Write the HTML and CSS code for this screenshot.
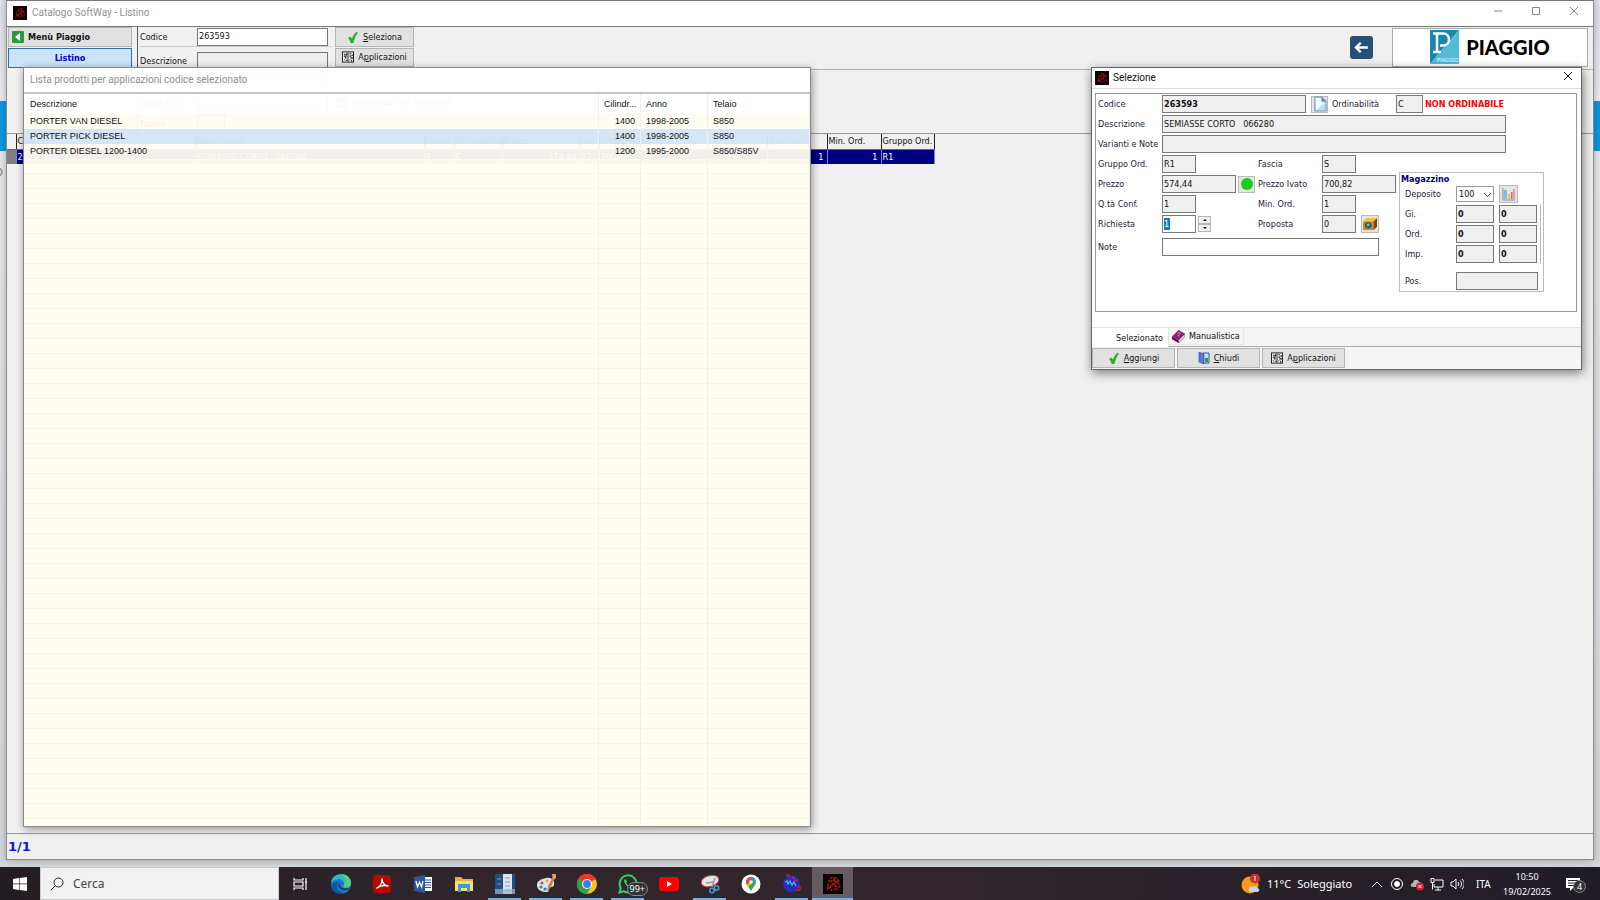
FILE: index.html
```html
<!DOCTYPE html>
<html lang="it">
<head>
  <meta charset="UTF-8">
  <title>Catalogo SoftWay - Listino</title>
  <meta name="viewport" content="width=device-width, initial-scale=1.0">
  <link rel="stylesheet" href="styles.css">
</head>
<body>

  <!-- shared icons -->
  <svg class="defs" width="0" height="0">
    <symbol id="i-app" viewBox="0 0 20 20">
      <rect width="20" height="20" fill="#080304"/>
      <path d="M4 16l1-4 1-5 3-4 4 1 3 3-1 2 2 3-3 4M7 8l3-2 3 3-4 2-3 4M11 4l2 4 3-1M5 13l3 1 1 3M12 11l2 2-3 4M9 9l4 4M7 12l4-1" fill="none" stroke="#b8141a" stroke-width="1.300" stroke-dasharray="3 1"/>
    </symbol>
    <symbol id="i-check" viewBox="0 0 12 12">
      <path d="M1.500 7l2-1 1.500 2.500c1-3 2.500-6 4.500-7.500l1 1C8.500 4 7 8 6 12H4C3.500 10 2.500 8 1.500 7z" fill="#22b81c" stroke="#128a10" stroke-width=".5"/>
    </symbol>
    <symbol id="i-grid" viewBox="0 0 13 12">
      <rect x=".5" y=".5" width="12" height="11" fill="#fff" stroke="#111"/>
      <path d="M6.500 1v10" stroke="#111"/>
      <path d="M2 3h2M5 2v2M2 5h3M3 7h2M2 9h1M4 9.500h2M8 2.500h2M11 3v2M8 5h2M9 7h3M8 9h1M10.500 9v2" stroke="#111" stroke-width="1.200"/>
    </symbol>
  </svg>

  <div class="desktop">
    <span class="desk-letter">O</span>

    <main class="window">
      <header class="titlebar">
        <svg class="app-icon"><use href="#i-app"/></svg>
        <h1>Catalogo SoftWay - Listino</h1>
        <div class="win-buttons">
          <button aria-label="Riduci"><svg viewBox="0 0 10 10"><path d="M1 5h8"/></svg></button>
          <button aria-label="Ingrandisci"><svg viewBox="0 0 10 10"><path d="M1.500 1.500h7v7h-7z"/></svg></button>
          <button aria-label="Chiudi"><svg viewBox="0 0 10 10"><path d="M1 1l8 8M9 1L1 9"/></svg></button>
        </div>
      </header>

      <section class="toolbar">
        <nav class="side">
          <button class="btn side-btn menu">
            <svg viewBox="0 0 12 12"><rect width="12" height="12" rx="1" fill="#2a9a3c"/><path d="M8 2v8L3 6z" fill="#fff"/></svg>
            Menù Piaggio
          </button>
          <button class="btn side-btn active">Listino</button>
        </nav>
        <form class="search">
          <div class="search-row first"><label for="codice">Codice</label><input id="codice" class="field" value="263593"></div>
          <div class="search-row"><label for="descr">Descrizione</label><input id="descr" class="field grey"></div>
          <div class="search-row"><label for="cerca1">Cerca in</label><input id="cerca1" class="field"></div>
          <div class="search-row"><label for="cerca2">Cerca in 2</label><input id="cerca2" class="field"></div>
          <div class="search-row"><label for="fascia">Fascia</label><input id="fascia" class="field short"></div>
        </form>
        <div class="tools">
          <div class="tools-top">
            <div class="tool-buttons">
              <button class="btn"><svg class="ic"><use href="#i-check"/></svg><span><u>S</u>eleziona</span></button>
              <button class="btn"><svg class="ic"><use href="#i-grid"/></svg><span>A<u>p</u>plicazioni</span></button>
            </div>
            <div class="brand">
              <button class="back" aria-label="Indietro"><svg viewBox="0 0 24 24"><path d="M20 12H6M11 6l-6 6 6 6"/></svg></button>
              <div class="logo">
                <svg class="logo-mark" viewBox="0 0 29 34">
                  <path d="M0 0h29L0 34z" fill="#1787b0"/>
                  <path d="M29 0v34H0z" fill="#55b9dc"/>
                  <path d="M3 3.500h10c8 0 8 12 0 12h-3M7 4v18M3 22h8" fill="none" stroke="#fff" stroke-width="2.500"/>
                  <text x="7" y="32">PIAGGIO</text>
                </svg>
                <span class="logo-text">PIAGGIO</span>
              </div>
            </div>
          </div>
          <label class="only"><input type="checkbox" checked> Visualizza non Ordinabili</label>
        </div>
      </section>

      <section class="results">
        <table class="price-list">
          <thead>
            <tr>
              <th class="c-mark"></th><th class="c-code">Codice</th><th class="c-desc">Descrizione</th><th class="c-fascia">Fascia</th><th class="c-ord">Ordinabilità</th><th class="c-price">Prezzo</th><th class="c-iva">Iva</th><th class="c-gross">Prezzo Ivato</th><th class="c-qty">Q.tà Conf.</th><th class="c-min">Min. Ord.</th><th class="c-group">Gruppo Ord.</th>
            </tr>
          </thead>
          <tbody>
            <tr>
              <td class="mark"></td><td>263593</td><td>SEMIASSE CORTO &nbsp; 066280</td><td>S</td><td>C</td><td class="num">574,44</td><td>22</td><td>700,82</td><td class="num">1</td><td class="num">1</td><td>R1</td>
            </tr>
          </tbody>
        </table>
      </section>

      <footer class="status">1/1</footer>
    </main>

    <!-- applications list -->
    <section class="popup">
      <h2>Lista prodotti per applicazioni codice selezionato</h2>
      <table class="apps">
        <thead>
          <tr><th>Descrizione</th><th class="a-cc">Cilindr...</th><th class="a-year">Anno</th><th class="a-frame">Telaio</th></tr>
        </thead>
        <tbody>
          <tr><td>PORTER VAN DIESEL</td><td class="num">1400</td><td>1998-2005</td><td>S850</td></tr>
          <tr class="selected"><td>PORTER PICK DIESEL</td><td class="num">1400</td><td>1998-2005</td><td>S850</td></tr>
          <tr><td>PORTER DIESEL 1200-1400</td><td class="num">1200</td><td>1995-2000</td><td>S850/S85V</td></tr>
          <tr class="filler"><td></td><td></td><td></td><td></td></tr>
        </tbody>
      </table>
    </section>

    <!-- selected item -->
    <section class="dialog">
      <header class="dialog-title">
        <svg class="app-icon"><use href="#i-app"/></svg>
        <h2>Selezione</h2>
        <button aria-label="Chiudi"><svg viewBox="0 0 10 10"><path d="M1 1l8 8M9 1L1 9"/></svg></button>
      </header>

      <form class="panel">
        <div class="wide">
          <div class="row">
            <label for="s-codice">Codice</label>
            <input id="s-codice" class="field grey bold w-code" value="263593" readonly>
            <button type="button" class="icon-btn flat" aria-label="Documento">
              <svg viewBox="0 0 16 18"><path d="M2 1h8l5 5v11H2z" fill="#b9dcf5" stroke="#6c8fb5"/><path d="M3 2h6v4l4 2-9 8z" fill="#f2f9fe"/><path d="M10 1v5h5z" fill="#4f86c0"/></svg>
            </button>
            <label for="s-ord" class="l-ord">Ordinabilità</label>
            <input id="s-ord" class="field grey w-ord" value="C" readonly>
            <strong class="warn">NON ORDINABILE</strong>
          </div>
          <div class="row"><label for="s-descr">Descrizione</label><input id="s-descr" class="field grey w-long" value="SEMIASSE CORTO   066280" readonly></div>
          <div class="row"><label for="s-var">Varianti e Note</label><input id="s-var" class="field grey w-long" readonly></div>
        </div>
        <div class="columns">
          <div class="left">
            <div class="row">
              <label for="s-gruppo">Gruppo Ord.</label><span class="cell"><input id="s-gruppo" class="field grey w-s" value="R1" readonly></span>
              <label for="s-fascia" class="l-mid">Fascia</label><input id="s-fascia" class="field grey w-s" value="S" readonly>
            </div>
            <div class="row">
              <label for="s-prezzo">Prezzo</label><span class="cell"><input id="s-prezzo" class="field grey w-m" value="574,44" readonly><button type="button" class="icon-btn" aria-label="Disponibile"><i class="dot"></i></button></span>
              <label for="s-ivato" class="l-mid">Prezzo Ivato</label><input id="s-ivato" class="field grey w-m" value="700,82" readonly>
            </div>
            <div class="row">
              <label for="s-qta">Q.tà Conf.</label><span class="cell"><input id="s-qta" class="field grey w-s" value="1" readonly></span>
              <label for="s-min" class="l-mid">Min. Ord.</label><input id="s-min" class="field grey w-s" value="1" readonly>
            </div>
            <div class="row">
              <label for="s-rich">Richiesta</label>
              <span class="cell">
                <input id="s-rich" class="field request w-s" value="1">
                <span class="spinner"><button type="button" aria-label="Aumenta"><i class="up"></i></button><button type="button" aria-label="Diminuisci"><i class="down"></i></button></span>
              </span>
              <label for="s-prop" class="l-mid">Proposta</label><input id="s-prop" class="field grey w-s" value="0" readonly>
              <button type="button" class="icon-btn box" aria-label="Imballo">
                <svg viewBox="0 0 16 16"><path d="M0 5l4-4h12l-4 4z" fill="#f4c04a"/><path d="M0 5h12v10H0z" fill="#d58b1c"/><path d="M12 5l4-4v10l-4 4z" fill="#7b4a10"/><circle cx="6" cy="9.500" r="3.800" fill="#18606c"/><path d="M4 8l3-1 1 2-3 2z" fill="#58c7b8"/></svg>
              </button>
            </div>
            <div class="row note"><label for="s-note">Note</label><input id="s-note" class="field w-note"></div>
          </div>

          <fieldset class="stock">
            <legend>Magazzino</legend>
            <div class="row">
              <label for="m-dep">Deposito</label>
              <select id="m-dep" class="field"><option>100</option></select>
              <button type="button" class="icon-btn chart" aria-label="Statistiche">
                <svg viewBox="0 0 14 14"><path d="M1 1v12h12" fill="none" stroke="#7b93a8"/><path d="M2 3h3v9H2z" fill="#7cbce6"/><path d="M6 7h2v5H6z" fill="#f2c33a"/><path d="M9 5h1.500v7H9z" fill="#e0605a"/><path d="M11 2h2v10h-2z" fill="#d9a0b0"/></svg>
              </button>
            </div>
            <div class="amounts">
              <div class="row"><label for="m-gi">Gi.</label><input id="m-gi" class="field grey bold" value="0" readonly><input aria-label="Gi. 2" class="field grey bold" value="0" readonly></div>
              <div class="row"><label for="m-ord">Ord.</label><input id="m-ord" class="field grey bold" value="0" readonly><input aria-label="Ord. 2" class="field grey bold" value="0" readonly></div>
              <div class="row"><label for="m-imp">Imp.</label><input id="m-imp" class="field grey bold" value="0" readonly><input aria-label="Imp. 2" class="field grey bold" value="0" readonly></div>
            </div>
            <div class="row pos"><label for="m-pos">Pos.</label><input id="m-pos" class="field grey w-pos" readonly></div>
          </fieldset>
        </div>
      </form>

      <div class="tabs">
        <button class="tab current">Selezionato</button>
        <button class="tab">
          <svg viewBox="0 0 14 14"><path d="M0 7l7-7 7 4-7 7z" fill="#8a1f7c"/><path d="M0 7v3l7 4v-3z" fill="#5b0f52"/><path d="M7 11l7-7v3l-7 7z" fill="#e8dfe8" stroke="#5b0f52" stroke-width=".6"/><path d="M6 4c1-2 4-1 2 1L7 6v1" fill="none" stroke="#ffd23a"/></svg>
          Manualistica
        </button>
      </div>
      <footer class="actions">
        <button class="btn"><svg class="ic"><use href="#i-check"/></svg><span><u>A</u>ggiungi</span></button>
        <button class="btn"><svg class="ic" viewBox="0 0 12 12"><path d="M5 1h6v10H5z" fill="#bfe3f5" stroke="#33549c"/><path d="M1 0l5 2v10l-5-2z" fill="#5b78d8" stroke="#2c3f94" stroke-width=".6"/><path d="M7 6h3v4H7z" fill="#2c9a48"/></svg><span><u>C</u>hiudi</span></button>
        <button class="btn"><svg class="ic"><use href="#i-grid"/></svg><span>A<u>p</u>plicazioni</span></button>
      </footer>
    </section>
  </div>

  <footer class="taskbar">
    <button class="start" aria-label="Start"><svg viewBox="0 0 14 14"><path d="M0 2l6-1v5.600H0zM6.600 .9L14 0v6.600H6.600zM0 7.300h6v5.600l-6-1zM6.600 7.300H14V14l-7.400-1z" fill="#fff"/></svg></button>
    <label class="find">
      <svg viewBox="0 0 14 14"><circle cx="8.500" cy="5.500" r="4.500"/><path d="M5.200 8.800L.8 13.200"/></svg>
      <input type="text" placeholder="Cerca" aria-label="Cerca">
    </label>
    <nav class="apps-bar">
      <button aria-label="Visualizzazione attività"><svg viewBox="0 0 20 20"><path d="M4 4v2h9V4M4 16v-2h9v2M4 8h9v4H4zM16 4v12M15 8h2" fill="none" stroke="#fff" stroke-width="1.200"/></svg></button>
      <button aria-label="Edge"><svg viewBox="0 0 20 20"><circle cx="10" cy="10" r="10" fill="#1278c8"/><path d="M0 9C1-3 20-2 20 9c0 5-5 6-8 4 3-5-1-8-5-8-4 1-6 2-7 4z" fill="#2fb9c0"/><path d="M10 0c7 0 10 5 10 9 0 4-5 5-8 4 5-5 2-10-2-13z" fill="#66d267" opacity=".8"/><path d="M7 9c-3 4 0 10 7 10-4 2-11 1-13-4-1-5 3-8 7-7z" fill="#0c57a5"/><path d="M9 9c-2 4 3 7 9 5 0 1-3 2-5 2-5-1-7-5-4-7z" fill="#262026"/></svg></button>
      <button aria-label="Acrobat"><svg viewBox="0 0 20 20"><rect x="1" y="1" width="18" height="18" rx="3" fill="#b30b00"/><path d="M5 14c3-1 5-5 5-9 0 4 3 7 6 7-4-1-8 0-11 2z" fill="none" stroke="#fff" stroke-width="1.400" stroke-linejoin="round"/></svg></button>
      <button aria-label="Word"><svg viewBox="0 0 20 20"><path d="M10 3h9v14h-9z" fill="#fff"/><path d="M12 6h6M12 8.500h6M12 11h6M12 13.500h6" stroke="#2b579a"/><path d="M1 3l11-2v18L1 17z" fill="#2b579a"/><path d="M3 7l1.500 6L6.500 8l2 5L10 7" fill="none" stroke="#fff" stroke-width="1.300"/></svg></button>
      <button aria-label="Esplora file"><svg viewBox="0 0 20 20"><path d="M1 3h6l2 2h10v12H1z" fill="#e9b13a"/><path d="M1 7h18v10H1z" fill="#ffdc78"/><path d="M4 10h12v8h-3v-4H7v4H4z" fill="#3f9bd8"/></svg></button>
      <button class="running" aria-label="Gestionale"><svg viewBox="0 0 20 20"><path d="M0 0h20v20H0z" fill="#1d4f80"/><path d="M8 0h9v20H8z" fill="#dce6ee"/><path d="M10 4h5M10 8h5M10 12h5M10 16h5M2 5h4M2 10h4" stroke="#7d98b0"/><path d="M0 15h20v5H0z" fill="#9bb5ca" opacity=".7"/></svg></button>
      <button class="running" aria-label="Paint"><svg viewBox="0 0 20 20"><path d="M10 4c6-1 9 3 8 7-1 3-4 1-5 3s1 4-3 4C4 18 1 15 1 11s4-6 9-7z" fill="#d7e6ee"/><circle cx="6" cy="9" r="1.600" fill="#e3473c"/><circle cx="5" cy="13" r="1.600" fill="#2f9e4c"/><circle cx="9" cy="15" r="1.500" fill="#2f6fd0"/><circle cx="11" cy="7" r="1.500" fill="#f0b020"/><path d="M18 1l-6 11-1 6 4-5 4-10z" fill="#c98442"/><path d="M16 0h4v4l-3 2z" fill="#e8a25c"/></svg></button>
      <button class="running" aria-label="Chrome"><svg viewBox="0 0 20 20"><circle cx="10" cy="10" r="10" fill="#fbc116"/><path d="M10 10L1.300 5A10 10 0 0 1 18.700 5z" fill="#e33b2e"/><path d="M10 10L1.300 5A10 10 0 0 0 10 20l4-7z" fill="#2fa24c"/><path d="M10 5h8.700" stroke="#e33b2e"/><circle cx="10" cy="10" r="5" fill="#fff"/><circle cx="10" cy="10" r="3.900" fill="#3b7ded"/></svg></button>
      <button class="running" aria-label="WhatsApp"><svg viewBox="0 0 20 20"><path d="M1.500 18.500l1.200-4.500a8.500 8.500 0 1 1 3.300 3.300z" fill="none" stroke="#2fd366" stroke-width="2"/><path d="M6 6c0 4 4 8 8 8l1-2-3-1-1 1-3-3 1-1-1-3z" fill="#2fd366"/></svg><span class="badge">99+</span></button>
      <button aria-label="YouTube"><svg viewBox="0 0 20 20"><rect y="3" width="20" height="14" rx="3" fill="#f00"/><path d="M8 7l5 3-5 3z" fill="#fff"/></svg></button>
      <button class="running" aria-label="Strumento di cattura"><svg viewBox="0 0 20 20"><ellipse cx="10" cy="7" rx="9" ry="5.500" transform="rotate(-15 10 7)" fill="#e9e4e4" stroke="#c0443c"/><path d="M6 9l8-1M15 4l-3 9" stroke="#8c98a4" stroke-width="1.500"/><circle cx="12" cy="16.500" r="2.200" fill="none" stroke="#3b9ad8" stroke-width="1.600"/><circle cx="16.500" cy="14" r="2.200" fill="none" stroke="#3b9ad8" stroke-width="1.600"/></svg></button>
      <button aria-label="Maps"><svg viewBox="0 0 20 20"><circle cx="10" cy="10" r="9.500" fill="#fff"/><path d="M10 18C9 13 5 12 5 8a5 5 0 0 1 10 0c0 4-4 5-5 10z" fill="#34a853"/><path d="M5 8a5 5 0 0 1 5-5v5l-4 3z" fill="#e8453c"/><path d="M10 3a5 5 0 0 1 4.500 3L10 8z" fill="#4285f4"/><path d="M6 11l4-4 1 2-4 4z" fill="#fbbc04"/><circle cx="10" cy="8" r="1.800" fill="#fff"/></svg></button>
      <button class="running" aria-label="Client"><svg viewBox="0 0 20 20"><circle cx="9.500" cy="10" r="8.500" fill="#2230b8"/><path d="M3 8l2-1 1 3 2-3 2 4 2-3 2 4" fill="none" stroke="#4cb4f0" stroke-width="1.300"/><path d="M4 2l3-1 1 3M10 3l2 1 1 3 3-1M15 13c2-1 4 0 3 2s-3 2-4 0" fill="none" stroke="#d01f2c" stroke-width="1.500"/></svg></button>
      <button class="running front" aria-label="Catalogo SoftWay"><svg><use href="#i-app"/></svg></button>
    </nav>
    <div class="tray">
      <div class="weather">
        <svg viewBox="0 0 20 20"><circle cx="9" cy="11" r="8.500" fill="#f59a1b"/><path d="M8 15c0-3 3-3 4-2 2-2 4-1 4 1 3 0 3 4 0 4h-6c-2 0-3-2-2-3z" fill="#bcd7f5"/><circle cx="14" cy="4.500" r="5" fill="#d32f20"/><path d="M13 3l1-1v5" fill="none" stroke="#fff"/></svg>
        <span>11°C</span><span>Soleggiato</span>
      </div>
      <div class="tray-icons">
        <svg viewBox="0 0 14 14"><path d="M2 10l5-5 5 5"/></svg>
        <svg viewBox="0 0 14 14"><circle cx="7" cy="7" r="5.500"/><circle cx="7" cy="7" r="2.500" fill="#fff"/></svg>
        <svg viewBox="0 0 14 14"><path d="M3 10c-3 0-3-4 0-4 0-4 5-4 6-1 3 0 4 4 1 5z" fill="#b5b5b5" stroke="none"/><circle cx="10" cy="9.500" r="4" fill="#d8232e" stroke="none"/><path d="M8.500 8l3 3M11.500 8l-3 3"/></svg>
        <svg viewBox="0 0 14 14"><path d="M5 3h8v7H4V7M8 10v3M5 13h6M1 1.500h3v4H1zM2.500 5.500v7"/></svg>
        <svg viewBox="0 0 14 14"><path d="M1 5h2l3-3v10L3 9H1zM8 5c1 1 1 3 0 4M10 3.500c2 2 2 5 0 7M12 2c3 3 3 7 0 10"/></svg>
      </div>
      <span class="lang">ITA</span>
      <div class="clock"><time>10:50</time><time>19/02/2025</time></div>
      <div class="notify">
        <svg viewBox="0 0 14 14"><path d="M0 1h14v10H7l-3 3v-3H0z" fill="#fff"/><path d="M2 3.500h10M2 6h10M2 8.500h6" stroke="#241f24"/></svg>
        <span>4</span>
      </div>
    </div>
  </footer>

</body>
</html>
```
FILE: styles.css
```css
:root {
  --ui: "DejaVu Sans Condensed", "DejaVu Sans", sans-serif;
  --segoe: "Noto Sans", sans-serif;
  --title: Roboto, "Noto Sans", sans-serif;
  --face: #f0f0f0;
  --navy: #000080;
}

* {
  box-sizing: border-box;
}

body {
  margin: 0;
  height: 100vh;
  display: flex;
  flex-direction: column;
  font-family: var(--ui);
  font-size: 9px;
  line-height: 12px;
  color: #111;
  overflow: hidden;
}

h1, h2 {
  margin: 0;
  font-weight: normal;
}

button, input, select {
  font: inherit;
  color: inherit;
  margin: 0;
}

button {
  padding: 0;
  border: 0;
  background: none;
}

.defs {
  position: absolute;
}

.desktop {
  position: relative;
  flex: 1;
  min-height: 0;
  display: flex;
  padding: 0 6px 7px;
  background: linear-gradient(#dfe3e8 0, #eceef2 101px, #0a9be0 101px, #0a9be0 151px, #e9ebef 151px, #d5d9dc 100%);
}

.desk-letter {
  position: absolute;
  left: -5px;
  top: 167px;
  font-size: 11px;
  color: #777;
}

/* main window */
.window {
  flex: 1;
  min-width: 0;
  display: flex;
  flex-direction: column;
  background: var(--face);
  border: 1px solid #8c8c8c;
  border-top-color: #777;
  box-shadow: 0 0 8px rgba(0,0,0,0.3);
}

.titlebar {
  display: flex;
  align-items: center;
  gap: 5px;
  height: 26px;
  padding: 0 0 2px 6px;
  background: #fff;
  border-bottom: 1px solid #777;
  color: #8f8f8f;
}

.titlebar h1 {
  font-family: var(--title);
  font-size: 10px;
}

.app-icon {
  width: 14px;
  height: 14px;
}

.win-buttons {
  display: flex;
  margin-left: auto;
}

.win-buttons button {
  width: 38px;
  height: 23px;
}

.win-buttons svg, .dialog-title button svg {
  width: 10px;
  height: 10px;
  fill: none;
  stroke: #888;
}

.toolbar {
  display: flex;
  height: 107px;
  border-bottom: 1px solid #999;
}

.side {
  display: flex;
  flex-direction: column;
  gap: 1px;
  width: 131px;
  padding: 0 5px 0 1px;
  border-right: 1px solid #555;
}

.btn {
  display: flex;
  align-items: center;
  justify-content: center;
  gap: 4px;
  height: 20px;
  background: #e1e1e1;
  border: 1px solid #b4b4b4;
}

.ic {
  width: 12px;
  height: 12px;
}

.side-btn {
  font-weight: bold;
}

.side-btn svg {
  width: 12px;
  height: 12px;
}

.menu {
  justify-content: flex-start;
  padding-left: 3px;
}

.active {
  background: #cce4f7;
  border-color: #2a72a8;
  color: #0000e0;
}

.search {
  width: 194px;
  padding-left: 2px;
}

.search-row {
  display: flex;
  align-items: center;
  height: 20px;
  margin-top: 1px;
}

.search-row.first {
  margin: 0 0 4px;
  border-bottom: 1px solid #ccc;
}

.search-row label {
  width: 57px;
}

.field {
  width: 131px;
  height: 18px;
  padding: 0 0 1px 1px;
  background: #fff;
  border: 1px solid #777;
  border-radius: 0;
  outline: 0;
}

.field.grey {
  background: #efefef;
}

.field.short {
  width: 28px;
}

.bold {
  font-weight: bold;
}

.tools {
  flex: 1;
}

.tools-top {
  display: flex;
  justify-content: space-between;
  height: 43px;
  padding: 0 5px 2px 3px;
  border-bottom: 1px solid #b0b0b0;
}

.tool-buttons {
  display: flex;
  flex-direction: column;
  gap: 1px;
  width: 79px;
}

.brand {
  display: flex;
  align-items: center;
  gap: 19px;
}

.back {
  width: 23px;
  height: 23px;
  border-radius: 3px;
  background: #284f78;
}

.back svg {
  width: 19px;
  height: 19px;
  fill: none;
  stroke: #fff;
  stroke-width: 3;
  vertical-align: middle;
}

.logo {
  display: flex;
  align-items: center;
  justify-content: center;
  gap: 7px;
  width: 196px;
  height: 39px;
  background: #fff;
  border: 1px solid #aaa;
}

.logo-mark {
  width: 29px;
  height: 34px;
}

.logo-mark text {
  font: 5px "Liberation Sans", sans-serif;
  fill: #fff;
}

.logo-text {
  font: 900 20px/22px Lato, sans-serif;
  color: #000;
}

.only {
  display: flex;
  align-items: center;
  gap: 6px;
  padding: 26px 0 0 4px;
}

.only input {
  width: 11px;
  height: 11px;
  margin: 0;
  accent-color: #888;
}

.results {
  flex: 1;
  min-height: 0;
}

.price-list {
  border-collapse: collapse;
  table-layout: fixed;
  width: 928px;
}

.price-list th, .price-list td {
  height: 15px;
  padding: 0 1px;
  font-weight: normal;
  text-align: left;
  white-space: nowrap;
  overflow: hidden;
  border-right: 1px solid #222;
  border-bottom: 1px solid #666;
}

.price-list td {
  background: var(--navy);
  color: #fff;
  border-color: #8080c0;
  border-bottom: 0;
}

.price-list td.mark {
  background: #808080;
}

.price-list .num, .apps .num {
  text-align: right;
}

.price-list .num {
  padding-right: 3px;
}

.c-mark { width: 9px; }
.c-code { width: 179px; }
.c-desc { width: 229px; }
.c-fascia { width: 30px; }
.c-ord { width: 48px; }
.c-price { width: 78px; }
.c-iva { width: 19px; }
.c-gross { width: 168px; }
.c-qty { width: 60px; }
.c-min { width: 54px; }

.status {
  height: 26px;
  padding: 6px 0 0 1px;
  border-top: 1px solid #999;
  font: bold 13px/14px "DejaVu Sans", sans-serif;
  color: #1414d2;
}

/* applications list */
.popup {
  position: absolute;
  left: 23px;
  top: 67px;
  bottom: 40px;
  width: 788px;
  display: flex;
  flex-direction: column;
  border: 1px solid #8a8a8a;
  box-shadow: 1px 2px 8px rgba(0,0,0,0.4);
}

.popup h2 {
  height: 26px;
  padding: 0 6px;
  background: rgba(255,255,255,0.98);
  border-bottom: 2px solid #c4c4c4;
  font-family: var(--title);
  font-size: 10px;
  line-height: 24px;
  color: #8f8f8f;
}

.apps {
  flex: 1;
  width: 100%;
  border-collapse: collapse;
  table-layout: fixed;
  font-family: "Liberation Sans", sans-serif;
}

.apps th, .apps td {
  height: 15px;
  padding: 0 5px 1px;
  font-weight: normal;
  text-align: left;
  white-space: nowrap;
  background: rgba(255,252,240,0.95);
  border-right: 1px solid #f1f0ea;
}

.apps th {
  height: 20px;
  background: rgba(255,255,255,0.97);
}

.apps th:first-child, .apps td:first-child {
  padding-left: 6px;
}

.apps .selected td {
  background: rgba(212,230,246,0.97);
}

.a-cc { width: 42px; }
.a-year { width: 67px; }
.a-frame { width: 102px; }

.apps .filler td {
  height: auto;
  background: repeating-linear-gradient(rgba(255,252,240,0.98) 0, rgba(255,252,240,0.98) 14px, #f6f4ec 14px, #f6f4ec 15px);
}

/* selected item dialog */
.dialog {
  position: absolute;
  right: 18px;
  top: 67px;
  width: 491px;
  display: flex;
  flex-direction: column;
  background: #fff;
  border: 1px solid #666;
  box-shadow: 1px 3px 10px rgba(0,0,0,0.5);
}

.dialog-title {
  display: flex;
  align-items: center;
  gap: 4px;
  height: 21px;
  padding: 0 3px 1px;
  border-bottom: 1px solid #ddd;
}

.dialog-title h2 {
  font-family: var(--title);
  font-size: 10px;
}

.dialog-title button {
  width: 20px;
  height: 20px;
  margin-left: auto;
}

.dialog-title button svg {
  stroke: #111;
}

.panel {
  height: 219px;
  margin: 4px 4px 0 3px;
  padding: 0 2px;
  border: 1px solid #999;
}

.row {
  display: flex;
  align-items: center;
  height: 20px;
}

.row > label {
  width: 64px;
  white-space: nowrap;
  color: #223;
}

.row > .l-ord {
  width: 64px;
  margin-left: 4px;
}

.row > .l-mid {
  width: 64px;
}

.cell {
  display: flex;
  align-items: center;
  gap: 2px;
  width: 96px;
}

.field.w-code { width: 144px; }
.field.w-ord { width: 27px; }
.field.w-long { width: 344px; }
.field.w-s { width: 34px; }
.field.w-m { width: 74px; }
.field.w-note { width: 217px; }

.icon-btn {
  display: flex;
  align-items: center;
  justify-content: center;
  width: 17px;
  height: 17px;
  background: #e4e4e4;
  border: 1px solid #bbb;
}

.icon-btn svg {
  width: 14px;
  height: 14px;
}

.flat {
  margin-left: 5px;
}

.flat svg {
  height: 16px;
}

.box {
  width: 18px;
  height: 18px;
  margin-left: 5px;
}

.dot {
  width: 12px;
  height: 12px;
  border-radius: 50%;
  background: #16d016;
}

.warn {
  margin-left: 2px;
  color: #f00;
  white-space: nowrap;
}

.columns {
  display: flex;
}

.left {
  width: 301px;
}

.note {
  height: 25px;
}

.request {
  background: linear-gradient(#0a78d6, #0a78d6) 1px 2px / 6px 12px no-repeat #fff;
  color: #fff;
}

.spinner {
  display: flex;
  flex-direction: column;
}

.spinner button {
  display: flex;
  align-items: center;
  justify-content: center;
  width: 13px;
  height: 8px;
  background: #f0f0f0;
  border: 1px solid #b5b5b5;
}

.up, .down {
  border: 2px solid transparent;
}

.up {
  border-top-width: 0;
  border-bottom-color: #111;
}

.down {
  border-bottom-width: 0;
  border-top-color: #111;
}

.stock {
  position: relative;
  width: 145px;
  height: 120px;
  min-width: 0;
  margin: 18px 0 0;
  padding: 11px 0 0 5px;
  border: 1px solid #bbb;
}

.stock legend {
  position: absolute;
  left: 1px;
  top: 0;
  padding: 0;
  font-weight: bold;
  color: var(--navy);
}

.stock .row {
  gap: 5px;
}

.stock .row > label {
  width: 46px;
}

.stock .field {
  width: 38px;
}

.stock .field.w-pos {
  width: 82px;
}

.stock select.field {
  height: 16px;
  padding: 0 0 0 2px;
  border-color: #999;
  appearance: none;
  background: linear-gradient(45deg, transparent 42%, #555 42%, #555 58%, transparent 58%) 27px 6px / 4px 4px no-repeat,
    linear-gradient(-45deg, transparent 42%, #555 42%, #555 58%, transparent 58%) 30px 6px / 4px 4px no-repeat, #fff;
}

.amounts {
  width: 136px;
  border-right: 1px solid #bbb;
}

.chart {
  width: 19px;
  height: 18px;
}

.stock .pos {
  margin-top: 7px;
}

.tabs {
  display: flex;
  height: 20px;
  margin-top: 15px;
  background: #f4f4f4;
  border-top: 1px solid #e2e2e2;
  border-bottom: 1px solid #aaa;
}

.tab {
  display: flex;
  align-items: center;
  gap: 4px;
  height: 17px;
  padding: 0 3px;
  border: 1px solid #e6e6e6;
  border-top: 0;
}

.tab svg {
  width: 13px;
  height: 13px;
}

.tab.current {
  height: 19px;
  padding: 1px 5px 0 24px;
  background: #fff;
  border: 0;
}

.actions {
  display: flex;
  gap: 2px;
  padding: 1px 0;
  background: #f4f4f4;
}

.actions .btn {
  width: 83px;
}

/* taskbar */
.taskbar {
  display: flex;
  align-items: stretch;
  height: 33px;
  background: linear-gradient(to right, #221d22, #30262c 30%, #30262c 60%, #201c26);
  color: #fff;
  font-family: var(--segoe);
}

.start {
  width: 40px;
}

.start svg {
  width: 14px;
  height: 14px;
  vertical-align: middle;
}

.find {
  display: flex;
  align-items: center;
  gap: 9px;
  width: 239px;
  padding-left: 9px;
  background: #f1f1f1;
  border: 1px solid #ccc;
}

.find svg {
  width: 14px;
  height: 14px;
  fill: none;
  stroke: #222;
}

.find input {
  flex: 1;
  min-width: 0;
  padding: 0;
  border: 0;
  outline: 0;
  background: none;
  font-size: 12px;
}

.find input::placeholder {
  color: #444;
}

.apps-bar {
  display: flex;
}

.apps-bar button {
  position: relative;
  display: flex;
  align-items: center;
  justify-content: center;
  width: 41px;
}

.apps-bar svg {
  width: 20px;
  height: 20px;
}

.running {
  background: linear-gradient(#76b0e0, #76b0e0) center bottom / 33px 2px no-repeat;
}

.front {
  background: linear-gradient(#76b0e0, #76b0e0) center bottom / 41px 2px no-repeat #655c63;
}

.badge {
  position: absolute;
  right: 0;
  bottom: 4px;
  padding: 0 2px;
  border: 1px solid #888;
  border-radius: 7px;
  background: #333;
  font-size: 9px;
  line-height: 12px;
}

.tray {
  display: flex;
  align-items: center;
  margin-left: auto;
  padding-right: 14px;
  font-size: 11px;
}

.weather {
  display: flex;
  align-items: center;
  gap: 6px;
  margin-right: 18px;
}

.weather svg {
  width: 20px;
  height: 20px;
}

.tray-icons {
  display: flex;
  gap: 6px;
  margin-right: 12px;
}

.tray-icons svg {
  width: 14px;
  height: 14px;
  fill: none;
  stroke: #fff;
}

.lang {
  width: 27px;
  font-size: 10px;
}

.clock {
  display: flex;
  flex-direction: column;
  align-items: center;
  font-size: 9px;
  line-height: 15px;
}

.notify {
  position: relative;
  margin-left: 15px;
  padding-right: 6px;
}

.notify svg {
  width: 14px;
  height: 14px;
  vertical-align: middle;
}

.notify span {
  position: absolute;
  right: 0;
  top: 4px;
  width: 13px;
  height: 13px;
  border: 1px solid #888;
  border-radius: 50%;
  background: #333;
  font-size: 9px;
  line-height: 11px;
  text-align: center;
}
```
